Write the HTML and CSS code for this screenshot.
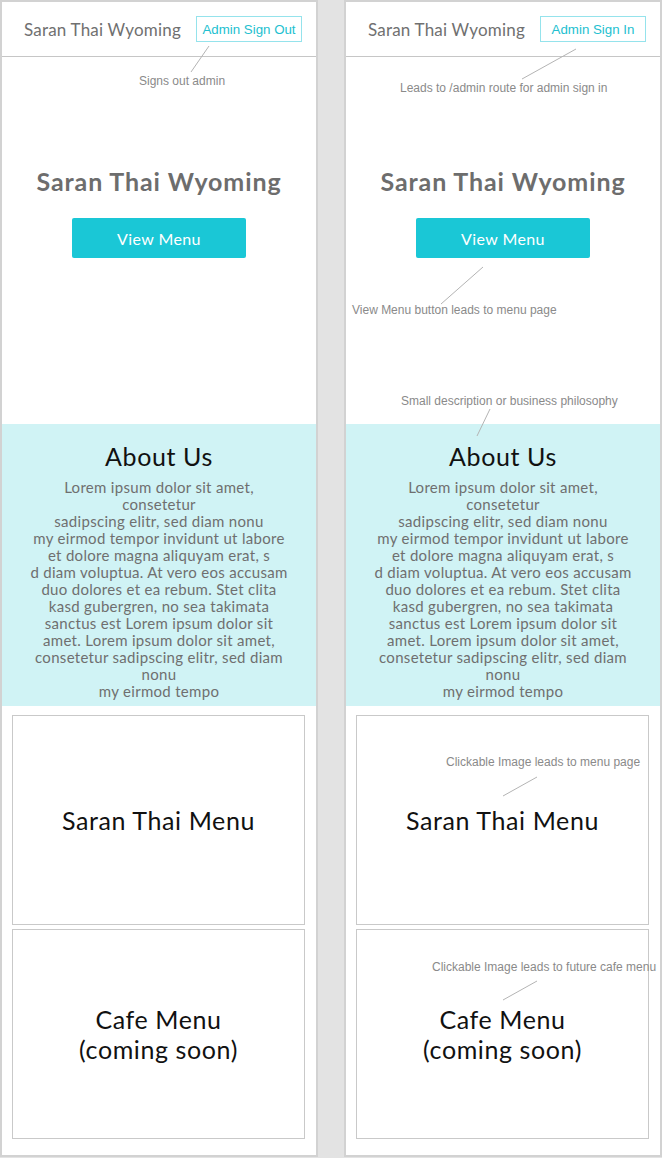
FILE: index.html
```html
<!DOCTYPE html>
<html lang="en">
<head>
<meta charset="utf-8">
<title>Saran Thai Wyoming – wireframes</title>
<link rel="stylesheet" href="styles.css">
</head>
<body>
<div class="board">
  <section class="panel">
    <header class="topbar">
      <span class="brand">Saran Thai Wyoming</span>
      <a class="admin-btn">Admin Sign Out</a>
    </header>
    <div class="hero">
      <h1 class="hero-title">Saran Thai Wyoming</h1>
      <a class="menu-btn">View Menu</a>
    </div>
    <div class="about">
      <h2 class="about-title">About Us</h2>
      <p class="about-text">Lorem ipsum dolor sit amet,<br>consetetur<br>sadipscing elitr, sed diam nonu<br>my eirmod tempor invidunt ut labore<br>et dolore magna aliquyam erat, s<br>d diam voluptua. At vero eos accusam<br>duo dolores et ea rebum. Stet clita<br>kasd gubergren, no sea takimata<br>sanctus est Lorem ipsum dolor sit<br>amet. Lorem ipsum dolor sit amet,<br>consetetur sadipscing elitr, sed diam<br>nonu<br>my eirmod tempo</p>
    </div>
    <div class="cards">
      <div class="card"><span class="card-title">Saran Thai Menu</span></div>
      <div class="card"><span class="card-title">Cafe Menu<br>(coming soon)</span></div>
    </div>
    <svg class="notes-lines" width="314" height="1153" viewBox="0 0 314 1153">
      <line x1="207" y1="44" x2="189" y2="70"/>
    </svg>
    <span class="note note-signout">Signs out admin</span>
  </section>

  <section class="panel">
    <header class="topbar">
      <span class="brand">Saran Thai Wyoming</span>
      <a class="admin-btn">Admin Sign In</a>
    </header>
    <div class="hero">
      <h1 class="hero-title">Saran Thai Wyoming</h1>
      <a class="menu-btn">View Menu</a>
    </div>
    <div class="about">
      <h2 class="about-title">About Us</h2>
      <p class="about-text">Lorem ipsum dolor sit amet,<br>consetetur<br>sadipscing elitr, sed diam nonu<br>my eirmod tempor invidunt ut labore<br>et dolore magna aliquyam erat, s<br>d diam voluptua. At vero eos accusam<br>duo dolores et ea rebum. Stet clita<br>kasd gubergren, no sea takimata<br>sanctus est Lorem ipsum dolor sit<br>amet. Lorem ipsum dolor sit amet,<br>consetetur sadipscing elitr, sed diam<br>nonu<br>my eirmod tempo</p>
    </div>
    <div class="cards">
      <div class="card"><span class="card-title">Saran Thai Menu</span></div>
      <div class="card"><span class="card-title">Cafe Menu<br>(coming soon)</span></div>
    </div>
    <svg class="notes-lines" width="314" height="1153" viewBox="0 0 314 1153">
      <line x1="230" y1="47" x2="176" y2="77"/>
      <line x1="137" y1="265" x2="95" y2="302"/>
      <line x1="144" y1="407" x2="131" y2="434"/>
      <line x1="191" y1="775" x2="157" y2="794"/>
      <line x1="191" y1="979" x2="157" y2="998"/>
    </svg>
    <span class="note note-signin">Leads to /admin route for admin sign in</span>
    <span class="note note-viewmenu">View Menu button leads to menu page</span>
    <span class="note note-about">Small description or business philosophy</span>
    <span class="note note-card1">Clickable Image leads to menu page</span>
    <span class="note note-card2">Clickable Image leads to future cafe menu</span>
  </section>
</div>
</body>
</html>
```

FILE: styles.css
```css
html, body {
  margin: 0;
  padding: 0;
}
body {
  background: #e3e3e3;
  width: 662px;
  height: 1158px;
  overflow: hidden;
}
.board {
  display: flex;
  gap: 26px;
}
.panel {
  position: relative;
  box-sizing: border-box;
  width: 318px;
  height: 1157px;
  background: #ffffff;
  border: 2px solid #d2d2d2;
  font-family: Lato, "Open Sans", sans-serif;
}
.topbar {
  box-sizing: border-box;
  height: 55px;
  border-bottom: 1px solid #c6c6c6;
  display: flex;
  align-items: center;
  justify-content: space-between;
  padding: 0 14px 0 22px;
}
.brand {
  font-size: 17px;
  color: #707070;
  letter-spacing: 0.2px;
}
.admin-btn {
  box-sizing: border-box;
  width: 106px;
  height: 26px;
  border: 1px solid #95e3ec;
  color: #22bfd0;
  font-family: "Liberation Sans", Arial, sans-serif;
  font-size: 13.3px;
  display: flex;
  align-items: center;
  justify-content: center;
}
.hero {
  box-sizing: border-box;
  height: 367px;
  display: flex;
  flex-direction: column;
  align-items: center;
  padding-top: 109px;
}
.hero-title {
  margin: 0;
  font-size: 25px;
  line-height: 30px;
  letter-spacing: 0.9px;
  font-weight: 700;
  color: #6d6d6d;
}
.menu-btn {
  margin-top: 22px;
  width: 174px;
  height: 40px;
  background: #1ac7d6;
  border-radius: 2px;
  color: #ffffff;
  font-size: 16px;
  letter-spacing: 0.4px;
  display: flex;
  align-items: center;
  justify-content: center;
}
.about {
  box-sizing: border-box;
  height: 282px;
  background: #d0f3f5;
  padding-top: 17px;
  text-align: center;
}
.about-title {
  margin: 0;
  font-size: 25px;
  line-height: 30px;
  letter-spacing: 0.6px;
  font-weight: 400;
  color: #111111;
}
.about-text {
  margin: 8px 0 0;
  font-size: 15px;
  line-height: 17px;
  letter-spacing: 0.3px;
  color: #6f6f6f;
}
.cards {
  display: flex;
  flex-direction: column;
  gap: 4px;
  padding: 9px 11px 0 10px;
}
.card {
  box-sizing: border-box;
  height: 210px;
  border: 1px solid #c9c9c9;
  display: flex;
  align-items: center;
  justify-content: center;
  text-align: center;
}
.card-title {
  font-size: 25px;
  line-height: 30px;
  letter-spacing: 0.6px;
  color: #111111;
}
.notes-lines {
  position: absolute;
  left: 0;
  top: 0;
  pointer-events: none;
}
.notes-lines line {
  stroke: #b4b4b4;
  stroke-width: 1;
}
.note {
  position: absolute;
  white-space: nowrap;
  font-family: "Liberation Sans", Arial, sans-serif;
  font-size: 12px;
  line-height: 13px;
  color: #8a8a8a;
}
.note-signout { left: 137px; top: 73px; }
.note-signin { left: 54px; top: 80px; }
.note-viewmenu { left: 6px; top: 302px; }
.note-about { left: 55px; top: 393px; }
.note-card1 { left: 100px; top: 754px; }
.note-card2 { left: 86px; top: 959px; }
```
